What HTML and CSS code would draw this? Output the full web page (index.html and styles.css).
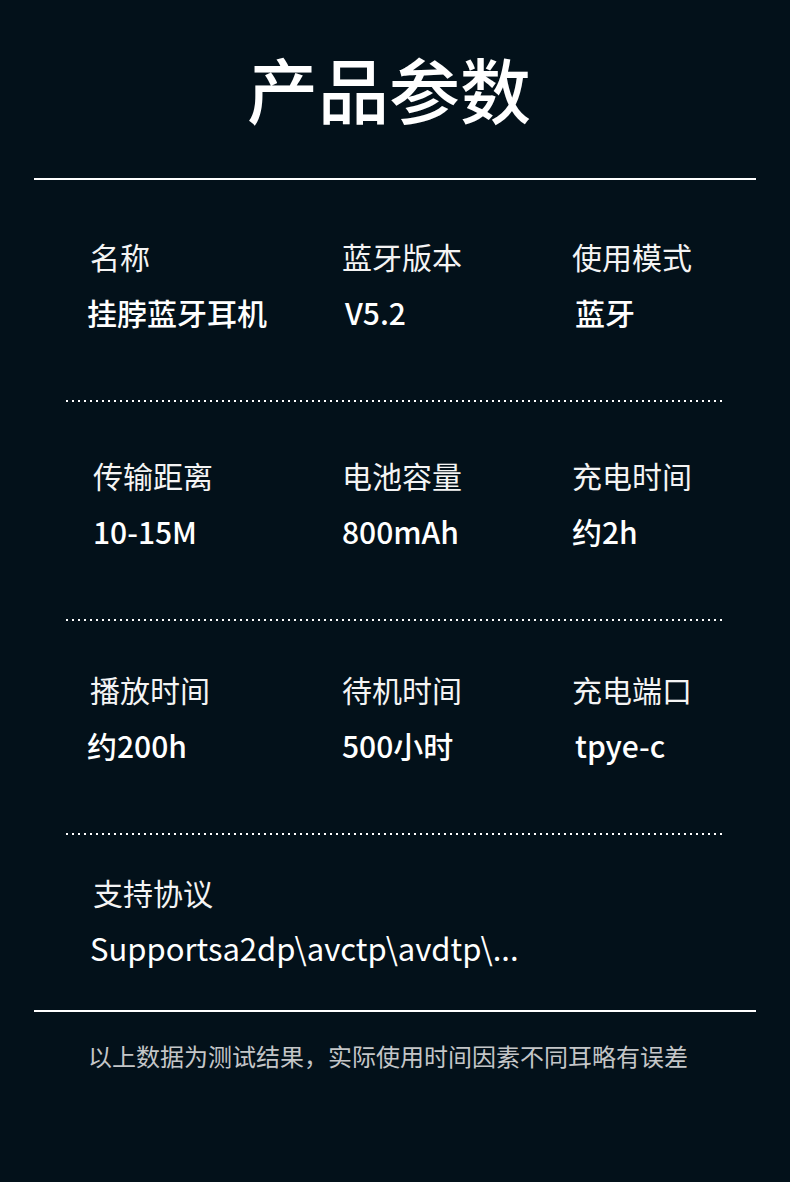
FILE: index.html
```html
<!DOCTYPE html>
<html lang="zh-CN">
<head>
    <meta charset="UTF-8">
    <meta name="viewport" content="width=device-width, initial-scale=1.0">
    <title>产品参数</title>
    <link rel="stylesheet" href="styles.css">
</head>
<body>

<div class="page">
    <header class="title-block">
        <h1 class="title">产品参数</h1>
    </header>
    <div class="rule"></div>

    <!-- Thông số: hàng 1 -->
    <section class="spec-row row-1">
        <div class="spec">
            <div class="spec-label">名称</div>
            <div class="spec-value shift-left">挂脖蓝牙耳机</div>
        </div>
        <div class="spec">
            <div class="spec-label">蓝牙版本</div>
            <div class="spec-value shift-right">V5.2</div>
        </div>
        <div class="spec">
            <div class="spec-label">使用模式</div>
            <div class="spec-value shift-right">蓝牙</div>
        </div>
    </section>
    <div class="dots"></div>

    <section class="spec-row row-2">
        <div class="spec shift-right">
            <div class="spec-label">传输距离</div>
            <div class="spec-value">10-15M</div>
        </div>
        <div class="spec">
            <div class="spec-label">电池容量</div>
            <div class="spec-value">800mAh</div>
        </div>
        <div class="spec">
            <div class="spec-label">充电时间</div>
            <div class="spec-value">约2h</div>
        </div>
    </section>
    <div class="dots"></div>

    <section class="spec-row row-3">
        <div class="spec">
            <div class="spec-label">播放时间</div>
            <div class="spec-value shift-left">约200h</div>
        </div>
        <div class="spec">
            <div class="spec-label">待机时间</div>
            <div class="spec-value">500小时</div>
        </div>
        <div class="spec">
            <div class="spec-label">充电端口</div>
            <div class="spec-value shift-right">tpye-c</div>
        </div>
    </section>
    <div class="dots"></div>

    <section class="spec-row row-4">
        <div class="spec spec-wide">
            <div class="spec-label">支持协议</div>
            <div class="spec-value">Supportsa2dp\avctp\avdtp\...</div>
        </div>
    </section>
    <div class="rule"></div>

    <p class="note">以上数据为测试结果，实际使用时间因素不同耳略有误差</p>
</div>

</body>
</html>
```

FILE: styles.css
```css
body {
    margin: 0;
    background-color: #03111a;
    color: #f4f4f4;
    font-family: "Noto Sans CJK SC", "Noto Sans", sans-serif;
}
.page {
    width: 790px;
    min-height: 1182px;
}
.title-block {
    padding: 45px 12px 0 0;
    text-align: center;
}
.title {
    margin: 0;
    font-size: 71px;
    line-height: 84px;
    font-weight: 500;
    color: #ffffff;
}
.rule {
    height: 2px;
    margin: 0 34px;
    background-color: #ffffff;
}
.title-block + .rule {
    margin-top: 49px;
}
.dots {
    height: 2px;
    margin: 0 68px 0 66px;
    background-image: repeating-linear-gradient(to right, #ffffff 0 2px, transparent 2px 6px);
}
.spec-row {
    display: grid;
    grid-template-columns: 252px 230px 1fr;
    padding: 0 0 68px 90px;
}
.row-1 { padding-top: 56px; }
.row-2 { padding-top: 53px; }
.row-3 { padding-top: 48px; }
.row-4 {
    padding-top: 37px;
    padding-bottom: 42px;
}
.spec-wide {
    grid-column: 1 / -1;
}
.spec-label {
    font-size: 30px;
    line-height: 40px;
    font-weight: 400;
}
.spec-value {
    margin-top: 16px;
    font-size: 30px;
    line-height: 40px;
    font-weight: 500;
    color: #ffffff;
}
.shift-left {
    margin-left: -3px;
}
.shift-right {
    padding-left: 3px;
}
.row-4 .spec-label {
    padding-left: 3px;
}
.row-4 .spec-value {
    font-size: 31px;
    font-weight: 400;
}
.note {
    margin: 0;
    padding: 28px 0 0 88px;
    font-size: 24px;
    line-height: 32px;
    color: #c4c6c8;
}
```
